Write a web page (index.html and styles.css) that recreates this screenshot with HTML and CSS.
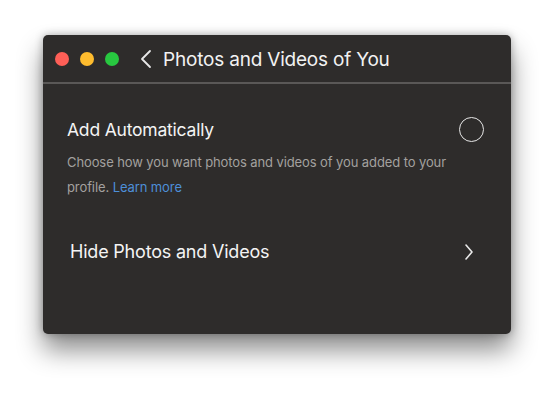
FILE: index.html
```html
<!DOCTYPE html>
<html>
<head>
<meta charset="utf-8">
<link rel="stylesheet" href="styles.css">
</head>
<body>
<div class="window">
  <div class="titlebar">
    <div class="lights">
      <span class="light red"></span>
      <span class="light yellow"></span>
      <span class="light green"></span>
    </div>
    <svg class="back" width="12" height="20" viewBox="0 0 12 20"><path d="M10 2 L2 10 L10 18" fill="none" stroke="#e8e8e8" stroke-width="1.8" stroke-linecap="round" stroke-linejoin="round"/></svg>
    <div class="title">Photos and Videos of You</div>
  </div>
  <div class="content">
    <div class="section">
      <div class="row">
        <div class="row-title">Add Automatically</div>
        <span class="radio"></span>
      </div>
      <p class="desc">Choose how you want photos and videos of you added to your profile. <a class="link">Learn more</a></p>
    </div>
    <div class="row nav-row">
      <div class="row-title">Hide Photos and Videos</div>
      <svg class="chev" width="10" height="18" viewBox="0 0 10 18"><path d="M2 2 L8 9 L2 16" fill="none" stroke="#e8e8e8" stroke-width="1.6" stroke-linecap="round" stroke-linejoin="round"/></svg>
    </div>
  </div>
</div>
</body>
</html>
```
FILE: styles.css
```css
html, body {
  margin: 0;
  padding: 0;
  background: #ffffff;
}
body {
  box-sizing: border-box;
  height: 398px;
  padding: 35px 0 0 43px;
  font-family: "Inter", "Liberation Sans", sans-serif;
}
.window {
  width: 468px;
  height: 299px;
  background: #2e2c2b;
  border-radius: 5px;
  box-shadow: 0 16px 26px rgba(0,0,0,0.45), 0 0 8px rgba(0,0,0,0.3);
  overflow: hidden;
  display: flex;
  flex-direction: column;
}
.titlebar {
  height: 47px;
  border-bottom: 2px solid #5a5857;
  display: flex;
  align-items: center;
  padding-left: 12px;
}
.lights {
  display: flex;
  gap: 11px;
}
.light {
  width: 14px;
  height: 14px;
  border-radius: 50%;
  display: block;
}
.red { background: #fe5f57; }
.yellow { background: #febc2e; }
.green { background: #28c840; }
.back {
  margin-left: 21px;
  display: block;
}
.title {
  margin-left: 11px;
  margin-top: 2px;
  color: #f2f2f2;
  font-size: 19px;
  letter-spacing: -0.2px;
}
.content {
  display: flex;
  flex-direction: column;
  padding: 33px 27px 0 24px;
}
.row {
  display: flex;
  align-items: center;
  justify-content: space-between;
}
.row-title {
  color: #f4f4f4;
  font-size: 17.5px;
  letter-spacing: -0.2px;
}
.radio {
  width: 23px;
  height: 23px;
  border: 1.6px solid #e6e6e6;
  border-radius: 50%;
  display: block;
}
.desc {
  margin: 8px 0 0;
  color: #a3a19f;
  font-size: 13px;
  line-height: 25px;
  max-width: 400px;
  letter-spacing: -0.1px;
}
.link {
  color: #4d8fd8;
}
.nav-row {
  margin-top: 41px;
  padding-left: 3px;
  padding-right: 10px;
}
.nav-row .row-title {
  font-size: 18px;
}
.chev {
  display: block;
}
```
